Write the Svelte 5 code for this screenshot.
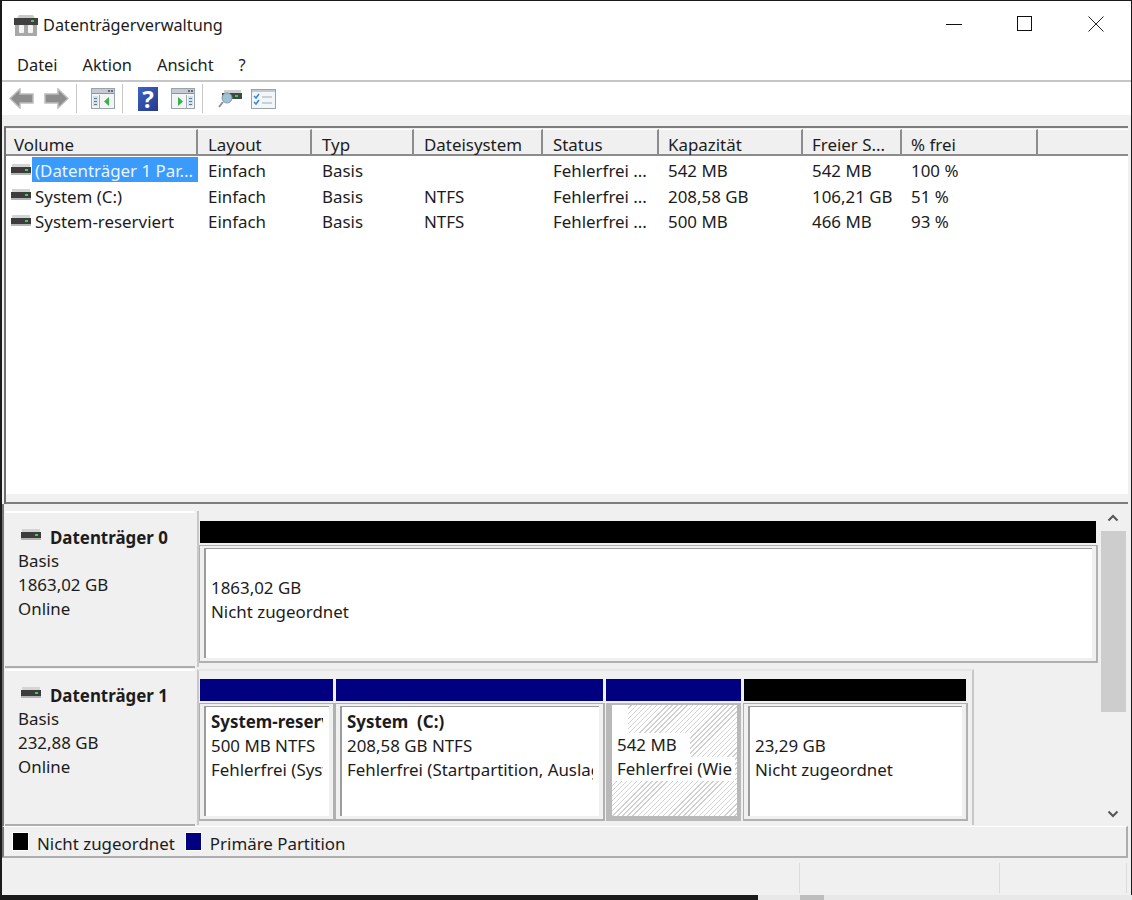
<script>
  const cols = [
    { t: 'Volume', w: 192 }, { t: 'Layout', w: 114 }, { t: 'Typ', w: 102 }, { t: 'Dateisystem', w: 129 },
    { t: 'Status', w: 116 }, { t: 'Kapazität', w: 144 }, { t: 'Freier S...', w: 99 }, { t: '% frei', w: 136 }, { t: '', w: 90 }
  ];
  const rows = [
    ['(Datenträger 1 Par...', 'Einfach', 'Basis', '', 'Fehlerfrei ...', '542 MB', '542 MB', '100 %'],
    ['System (C:)', 'Einfach', 'Basis', 'NTFS', 'Fehlerfrei ...', '208,58 GB', '106,21 GB', '51 %'],
    ['System-reserviert', 'Einfach', 'Basis', 'NTFS', 'Fehlerfrei ...', '500 MB', '466 MB', '93 %']
  ];
  const disk1 = [
    { w: 136, c: 'blue', title: 'System-reserviert', lines: ['500 MB NTFS', 'Fehlerfrei (System, Aktiv, Primäre Partition)'] },
    { w: 270, c: 'blue', title: 'System  (C:)', lines: ['208,58 GB NTFS', 'Fehlerfrei (Startpartition, Auslagerungsdatei, Absturzabbild)'] },
    { w: 138, c: 'blue', sel: true, lines: ['542 MB', 'Fehlerfrei (Wiederherstellungspartition)'] },
    { w: 225, c: 'black', lines: ['23,29 GB', 'Nicht zugeordnet'] }
  ];
</script>

{#snippet drive(w, h)}
  <svg width={w} height={h} viewBox="0 0 20 12" class="drive">
    <rect x="1" y="0" width="18" height="4" fill="#d4d4d4"/>
    <rect x="0" y="3" width="20" height="6" fill="#3c3c3c"/>
    <rect x="0" y="9" width="20" height="2" fill="#b4b4b4"/>
    <rect x="14" y="5" width="3" height="2" fill="#3fd04a"/>
  </svg>
{/snippet}

{#snippet listWin(right)}
  <svg width="24" height="21" viewBox="0 0 24 21">
    <rect x="0.5" y="0.5" width="23" height="20" fill="#f2f4f6" stroke="#9aa3aa"/>
    <rect x="1" y="1" width="22" height="4" fill="#c3cad0"/>
    <rect x="1" y="5" width="22" height="1" fill="#8b959c"/>
    <rect x="17" y="2" width="2" height="2" fill="#667"/><rect x="20" y="2" width="2" height="2" fill="#667"/>
    {#if right}
      <rect x="15" y="7" width="1" height="13" fill="#a2abb2"/>
      <rect x="17" y="8" width="5" height="10" fill="#cfe0f0"/>
      <path d="M7 9l5 4.500-5 4.500z" fill="#35b544"/>
      <rect x="18" y="10" width="3" height="1" fill="#678"/><rect x="18" y="13" width="3" height="1" fill="#678"/><rect x="18" y="16" width="3" height="1" fill="#678"/>
    {:else}
      <rect x="8" y="7" width="1" height="13" fill="#a2abb2"/>
      <rect x="2" y="8" width="5" height="10" fill="#cfe0f0"/>
      <path d="M18 9l-5 4.500 5 4.500z" fill="#35b544"/>
      <rect x="3" y="10" width="3" height="1" fill="#678"/><rect x="3" y="13" width="3" height="1" fill="#678"/><rect x="3" y="16" width="3" height="1" fill="#678"/>
    {/if}
  </svg>
{/snippet}

<div class="screen">
  <div class="window">
    <header class="title">
      <svg class="appicon" width="24" height="21" viewBox="0 0 24 21">
        <path d="M5 0h14l2 3H3z" fill="#c9c9c9"/>
        <rect x="0" y="3" width="24" height="7" fill="#3f3f3f"/>
        <rect x="17" y="5" width="3" height="2" fill="#39d04a"/>
        <path d="M1 10h22v11H1z" fill="#a8a8a8"/>
        <rect x="5" y="10" width="5" height="8" rx="1" fill="#f4f4f4"/>
        <rect x="14" y="10" width="5" height="8" rx="1" fill="#f4f4f4"/>
      </svg>
      <span class="titletext">Datenträgerverwaltung</span>
      <div class="controls">
        <svg width="16" height="16" viewBox="0 0 16 16"><path d="M0 8.500h16" stroke="#111" fill="none"/></svg>
        <svg width="16" height="16" viewBox="0 0 16 16"><rect x="0.500" y="0.500" width="14" height="14" stroke="#111" fill="none"/></svg>
        <svg width="16" height="16" viewBox="0 0 16 16"><path d="M0.500 0.500l15 15M15.500 0.500l-15 15" stroke="#222" fill="none"/></svg>
      </div>
    </header>

    <nav class="menu">
      <span>Datei</span><span>Aktion</span><span>Ansicht</span><span>?</span>
    </nav>

    <div class="toolbar">
      <svg class="b1" width="25" height="21" viewBox="0 0 25 21"><path d="M1 10.500 11 1v5h13v9H11v5z" fill="#8d8d8d" stroke="#bdbdbd" stroke-width="1.500"/></svg>
      <svg class="b2" width="25" height="21" viewBox="0 0 25 21"><path d="M24 10.500 14 1v5H1v9h13v5z" fill="#8d8d8d" stroke="#bdbdbd" stroke-width="1.500"/></svg>
      <i class="sep s1"></i>
      <span class="b3">{@render listWin(false)}</span>
      <i class="sep s2"></i>
      <span class="help">?</span>
      <span class="b5">{@render listWin(true)}</span>
      <i class="sep s3"></i>
      <svg class="b6" width="24" height="21" viewBox="0 0 24 21">
        <rect x="6" y="2" width="17" height="3" fill="#cfcfcf"/>
        <rect x="4" y="5" width="20" height="6" fill="#3f4a45"/>
        <rect x="17" y="7" width="3" height="2" fill="#39d04a"/>
        <circle cx="9" cy="10" r="5" fill="#9cc3d8" stroke="#8d9aa3"/>
        <path d="M5 14l-4 5" stroke="#8f8f8f" stroke-width="2"/>
      </svg>
      <svg class="b7" width="25" height="20" viewBox="0 0 25 20">
        <rect x="0.500" y="0.500" width="24" height="19" fill="#f3f6f8" stroke="#9aa3aa"/>
        <rect x="1" y="1" width="23" height="2" fill="#c3cad0"/>
        <path d="M3 7l2 2 3-4M3 13l2 2 3-4" stroke="#3586d8" stroke-width="1.500" fill="none"/>
        <path d="M11 8h10M11 14h10" stroke="#bcc3c8" stroke-width="1.500"/>
      </svg>
    </div>

    <section class="list">
      <div class="head">
        {#each cols as c}
          <div class="hcell" style="width:{c.w}px">{c.t}</div>
        {/each}
      </div>
      <div class="body">
        {#each rows as r, i}
          <div class="row">
            <div class="cell first" style="width:{cols[0].w}px">
              {@render drive(20, 12)}
              <span class="vol" class:selected={i === 0}>{r[0]}</span>
            </div>
            {#each r.slice(1) as v, j}
              <div class="cell" style="width:{cols[j + 1].w}px">{v}</div>
            {/each}
          </div>
        {/each}
      </div>
      <div class="listfoot"></div>
    </section>

    <section class="disks">
      <div class="diskscroll">
        <div class="disk d0">
          <div class="label">
            <div class="dname">{@render drive(20, 12)}<b>Datenträger 0</b></div>
            <div>Basis</div><div>1863,02 GB</div><div>Online</div>
          </div>
          <div class="parts full">
            <div class="part" style="width:899px">
              <div class="bar black"></div>
              <div class="pbox">
                <div class="pinner">
                  <div class="pline blank"></div>
                  <div class="pline">1863,02 GB</div>
                  <div class="pline">Nicht zugeordnet</div>
                </div>
              </div>
            </div>
          </div>
        </div>
        <div class="disk d1">
          <div class="label">
            <div class="dname">{@render drive(20, 12)}<b>Datenträger 1</b></div>
            <div>Basis</div><div>232,88 GB</div><div>Online</div>
          </div>
          <div class="parts">
            {#each disk1 as p}
              <div class="part" style="width:{p.w}px">
                <div class="bar {p.c}"></div>
                <div class="pbox" class:sel={p.sel}>
                  <div class="pinner" class:hatch={p.sel}>
                    {#if p.title}
                      <div class="pline"><b>{p.title}</b></div>
                    {:else}
                      <div class="pline blank"></div>
                    {/if}
                    {#each p.lines as l}
                      <div class="pline"><span class="wb">{l}</span></div>
                    {/each}
                  </div>
                </div>
              </div>
            {/each}
          </div>
        </div>
      </div>
      <div class="scroll">
        <svg width="12" height="8" viewBox="0 0 12 8"><path d="M1.500 6.500 6 2l4.500 4.500" stroke="#555" stroke-width="2" fill="none"/></svg>
        <div class="thumb"></div>
        <svg class="down" width="12" height="8" viewBox="0 0 12 8"><path d="M1.500 1.500 6 6l4.500-4.500" stroke="#555" stroke-width="2" fill="none"/></svg>
      </div>
    </section>

    <footer class="legend">
      <i class="swatch black"></i><span>Nicht zugeordnet</span>
      <i class="swatch blue"></i><span>Primäre Partition</span>
    </footer>

    <div class="status">
      <i class="st a"></i><i class="st b"></i><i class="st c"></i>
    </div>
  </div>
  <div class="strip"><div class="dark"></div><div class="light"></div></div>
</div>

<style>
  :global(body) { margin: 0; background: #1a1a1a; }
  .screen {
    width: 1132px; height: 900px; overflow: hidden; background: #1a1a1a;
    display: flex; flex-direction: column;
    font-family: "Noto Sans", "Open Sans", sans-serif; font-size: 16.900px; color: #1c1c1c;
  }
  .screen * { box-sizing: border-box; }
  .window {
    margin: 1px 1px 0 2px; height: 894px; background: #f0f0f0;
    display: flex; flex-direction: column;
  }
  .title { height: 43px; background: #fff; display: flex; align-items: center; flex: none; position: relative; }
  .appicon { margin-left: 12px; margin-top: 6px; }
  .titletext { margin-left: 5px; font-size: 16.300px; margin-top: 5px; }
  .controls { margin-left: auto; display: flex; gap: 55px; padding-right: 27px; margin-top: 3px; }
  .menu {
    height: 38px; background: #fff; flex: none; border-bottom: 2px solid #c6c6c6; font-size: 16.400px;
    display: flex; gap: 25px; padding: 9px 0 0 15px; line-height: 24px;
  }
  .toolbar { height: 33px; background: #fff; flex: none; display: flex; align-items: center; padding-left: 7px; }
  .toolbar > * { flex: none; }
  .b2 { margin-left: 10px; }
  .sep { width: 1px; height: 29px; background: #c8c8c8; display: block; }
  .s1 { margin-left: 7px; }
  .b3 { margin-left: 14px; height: 21px; }
  .s2 { margin-left: 7px; }
  .help {
    margin-left: 15px; width: 20px; height: 24px; background: linear-gradient(135deg, #3c63c4, #27398c);
    color: #fff; font-weight: 700; font-size: 24px; line-height: 24px; text-align: center;
  }
  .b5 { margin-left: 13px; height: 21px; }
  .s3 { margin-left: 7px; }
  .b6 { margin-left: 15px; }
  .b7 { margin-left: 9px; }

  .list {
    margin: 11px 3px 0 2px; height: 378px; flex: none; background: #fff;
    border-top: 2px solid #7d7d7d; border-left: 2px solid #6e6e6e;
    display: flex; flex-direction: column;
  }
  .head { display: flex; height: 28px; flex: none; background: #f0f0f0; border-bottom: 2px solid #8c8c8c; padding-top: 1px; }
  .hcell {
    flex: none; padding: 3px 0 0 10px; line-height: 24px; white-space: nowrap;
    border-right: 2px solid #8c8c8c; border-top: 1px solid #fff;
  }
  .head .hcell:first-child { padding-left: 8px; }
  .head .hcell:last-child { border-right: 0; }
  .head .hcell:nth-child(n+6) { padding-left: 9px; }
  .body { flex: 1; padding-top: 1px; }
  .row { display: flex; height: 25.500px; line-height: 25.500px; }
  .cell { flex: none; padding: 1px 0 0 10px; white-space: nowrap; overflow: hidden; }
  .cell:nth-child(n+6) { padding-left: 9px; }
  .first { padding: 0 0 0 5px; display: flex; align-items: center; }
  .drive { flex: none; }
  .vol { margin-left: 1px; padding: 1px 2px 0 3px; flex: 1; height: 25px; }
  .selected { background: #3a9bfb; color: #eaf5ff; }
  .listfoot { height: 10px; flex: none; background: #f0f0f0; border-bottom: 2px solid #7d7d7d; }

  .disks { height: 322px; flex: none; display: flex; padding-left: 1px; border-left: 2px solid #777; }
  .diskscroll { width: 1095px; flex: none; padding-top: 7px; }
  .disk { height: 158px; display: flex; }
  .label {
    width: 190px; flex: none; padding: 11px 0 0 13px; line-height: 24px; height: 157px;
    border-bottom: 2px solid #adadad; border-top: 2px solid #fff; margin-right: 2px;
  }
  .dname { display: flex; align-items: center; height: 25px; margin-left: 3px; }
  .dname b { margin-left: 9px; position: relative; top: 1px; }
  .dname .drive { margin-top: -4px; }
  .parts { display: flex; border-left: 2px solid #c8c8c8; padding: 8px 0 0 1px; height: 156px; width: 777px; border-right: 2px solid #c8c8c8; border-top: 2px solid #e6e6e6; }
  .parts.full { width: 901px; border-right: 0; border-top: 0; padding-top: 10px; }
  .part { flex: none; display: flex; flex-direction: column; padding-right: 3px; }
  .bar { height: 22px; flex: none; }
  .black { background: #000; }
  .blue { background: #000080; }
  .pbox {
    flex: 1; margin: 2px -2px 4px -1px; padding: 2px 4px 3px 4px; min-height: 0;
    background: #f0f0f0; border: 2px solid #b0b0b0; border-top: 1px solid #b0b0b0; border-left-width: 1px;
  }
  .pbox.sel { border: 0; margin: 2px 0 4px 0; background: #b9b9b9; padding: 2px 4px 5px 6px; }
  .pinner {
    height: 100%; background: #fff; border: 1px solid #9c9c9c; border-width: 1px 0 0 2px;
    padding: 3px 6px 0 5px; overflow: hidden; line-height: 24px;
  }
  .hatch {
    border: 0; padding: 0 2px 0 0;
    background: repeating-linear-gradient(135deg, #fff 0 2.600px, #d2d2d2 2.600px 3.600px);
  }
  .pline { white-space: pre; overflow: hidden; height: 24px; }
  .hatch .pline { background: #fff; padding: 0 3px 0 5px; }
  .hatch .blank { width: 16px; height: 28px; padding: 0; }
  .hatch .pline:nth-child(2) { width: 78px; }
  .hatch .wb { display: block; overflow: hidden; }

  .scroll { width: 26px; flex: none; padding-top: 10px; display: flex; flex-direction: column; align-items: center; }
  .thumb { width: 25px; height: 181px; background: #cdcdcd; margin-top: 9px; }
  .down { margin-top: auto; margin-bottom: 8px; }

  .legend {
    height: 32px; flex: none; margin: 0 3px 0 0; display: flex; align-items: center;
    padding: 0 0 1px 8px; border-top: 1px solid #fff; border-bottom: 2px solid #adadad; border-right: 2px solid #adadad; border-left: 2px solid #777;
  }
  .swatch { width: 17px; height: 19px; display: block; flex: none; border: 1px solid #fff; }
  .legend span { margin-left: 8px; margin-right: 10px; padding-top: 4px; }
  .status { flex: 1; position: relative; margin-top: 2px; }
  .st { position: absolute; top: 3px; bottom: 2px; width: 1px; background: #dcdcdc; }
  .st.a { left: 797px; } .st.b { left: 997px; } .st.c { left: 1124px; }
  .strip { flex: 1; display: flex; }
  .strip .dark { width: 758px; background: #1a1a1a; }
  .strip .light { flex: 1; background: linear-gradient(90deg, #e8e8e8 0 42px, #bdbdbd 42px 66px, #e8e8e8 66px); }
</style>
